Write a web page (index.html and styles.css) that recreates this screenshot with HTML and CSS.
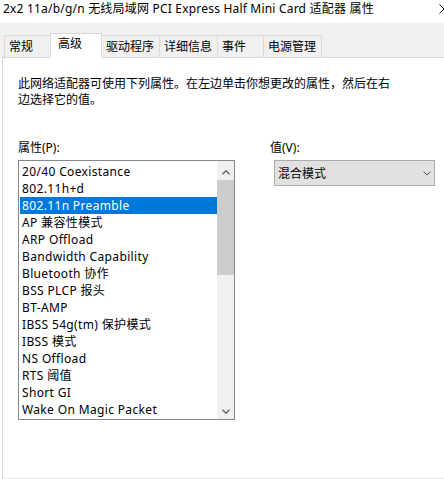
FILE: index.html
```html
<!DOCTYPE html>
<html lang="zh-CN">
<head>
<meta charset="utf-8">
<title>属性</title>
<link rel="stylesheet" href="styles.css">
</head>
<body>
<div class="window">
  <div class="titlebar">
    <span class="title">2x2 11a/b/g/n 无线局域网 PCI Express Half Mini Card 适配器 属性</span>
    <svg class="close" width="10" height="10" viewBox="0 0 10 10"><path d="M0.5 0.5L9.5 9.5M9.5 0.5L0.5 9.5" stroke="#000" stroke-width="1" fill="none"/></svg>
  </div>
  <div class="tabstrip">
    <div class="tab">常规</div>
    <div class="tab active">高级</div>
    <div class="tab">驱动程序</div>
    <div class="tab">详细信息</div>
    <div class="tab">事件</div>
    <div class="tab">电源管理</div>
  </div>
  <div class="pane">
    <p class="desc">此网络适配器可使用下列属性。在左边单击你想更改的属性，然后在右<br>边选择它的值。</p>
    <div class="columns">
      <div class="col-left">
        <div class="label">属性(P):</div>
        <div class="listbox">
          <ul class="items">
            <li>20/40 Coexistance</li>
            <li>802.11h+d</li>
            <li class="selected">802.11n Preamble</li>
            <li>AP 兼容性模式</li>
            <li>ARP Offload</li>
            <li>Bandwidth Capability</li>
            <li>Bluetooth 协作</li>
            <li>BSS PLCP 报头</li>
            <li>BT-AMP</li>
            <li>IBSS 54g(tm) 保护模式</li>
            <li>IBSS 模式</li>
            <li>NS Offload</li>
            <li>RTS 阈值</li>
            <li>Short GI</li>
            <li>Wake On Magic Packet</li>
          </ul>
          <div class="scrollbar">
            <div class="sb-btn sb-up"><svg width="8" height="5" viewBox="0 0 8 5"><path d="M0.5 4.2L4 0.8L7.5 4.2" stroke="#606060" stroke-width="1.4" fill="none"/></svg></div>
            <div class="sb-track"><div class="sb-thumb"></div></div>
            <div class="sb-btn sb-down"><svg width="8" height="5" viewBox="0 0 8 5"><path d="M0.5 0.8L4 4.2L7.5 0.8" stroke="#606060" stroke-width="1.4" fill="none"/></svg></div>
          </div>
        </div>
      </div>
      <div class="col-right">
        <div class="label">值(V):</div>
        <div class="combo">
          <span>混合模式</span>
          <svg class="combo-arrow" width="8" height="5" viewBox="0 0 8 5"><path d="M0.5 0.5L4 4L7.5 0.5" stroke="#555" stroke-width="1" fill="none"/></svg>
        </div>
      </div>
    </div>
  </div>
</div>
</body>
</html>
```

FILE: styles.css
```css
html, body {
  margin: 0;
  padding: 0;
  background: #fff;
  overflow: hidden;
}
body {
  font-family: "Noto Sans", "Noto Sans CJK SC", sans-serif;
  font-size: 12px;
  color: #000;
}
.window {
  height: 479px;
  display: flex;
  flex-direction: column;
}
.titlebar {
  height: 23px;
  box-sizing: border-box;
  padding: 1px 0 0 3px;
  line-height: 16px;
  display: flex;
  align-items: flex-start;
  background: #fff;
  white-space: nowrap;
}
.title {
  letter-spacing: 0.2px;
}
.close {
  margin-left: auto;
  margin-right: -5px;
  margin-top: 3px;
  flex-shrink: 0;
}
.tabstrip {
  height: 34px;
  box-sizing: border-box;
  background: #f0f0f0;
  display: flex;
  align-items: flex-end;
  padding-left: 4px;
}
.tab {
  height: 22px;
  box-sizing: border-box;
  min-width: 47px;
  border: 1px solid #d9d9d9;
  border-bottom: none;
  margin-left: -1px;
  padding: 0 5px 0 4px;
  line-height: 21px;
  white-space: nowrap;
}
.tab:first-child {
  margin-left: 0;
}
.tab.active {
  height: 25px;
  min-width: 52px;
  margin-bottom: -1px;
  padding: 0 5px 2px 7px;
  line-height: 20px;
  background: #fff;
  position: relative;
  z-index: 1;
}
.pane {
  flex: 1;
  margin-left: 2px;
  border-top: 1px solid #d9d9d9;
  border-left: 1px solid #d9d9d9;
  border-bottom: 1px solid #e5e5e5;
  padding-left: 15px;
  background: #fff;
}
.desc {
  margin: 0;
  padding-top: 18px;
  line-height: 16px;
}
.columns {
  margin-top: 32px;
  display: flex;
  align-items: flex-start;
}
.label {
  line-height: 16px;
  height: 16px;
  margin-bottom: 4px;
}
.col-left {
  width: 217px;
}
.col-right {
  margin-left: 35px;
}
.listbox {
  height: 260px;
  box-sizing: border-box;
  border: 1px solid #828790;
  display: flex;
}
.items {
  list-style: none;
  margin: 0;
  padding: 2px 0 0 1px;
  flex: 1;
  overflow: hidden;
}
.items li {
  height: 17px;
  line-height: 17px;
  padding-left: 2px;
  white-space: nowrap;
  letter-spacing: 0.35px;
}
.items li.selected {
  background: #0078d7;
  color: #fff;
}
.scrollbar {
  width: 17px;
  background: #f0f0f0;
  display: flex;
  flex-direction: column;
}
.sb-btn {
  height: 17px;
  display: flex;
  justify-content: center;
  align-items: flex-start;
}
.sb-up svg {
  margin-top: 9px;
}
.sb-down svg {
  margin-top: 7px;
}
.sb-track {
  flex: 1;
  padding-top: 2px;
}
.sb-thumb {
  height: 95px;
  background: #cdcdcd;
}
.combo {
  margin-left: 4px;
  margin-top: 1px;
  width: 161px;
  height: 26px;
  box-sizing: border-box;
  background: #e1e1e1;
  border: 1px solid #adadad;
  display: flex;
  align-items: center;
  padding-left: 3px;
}
.combo-arrow {
  margin-left: auto;
  margin-right: 3px;
}
```
